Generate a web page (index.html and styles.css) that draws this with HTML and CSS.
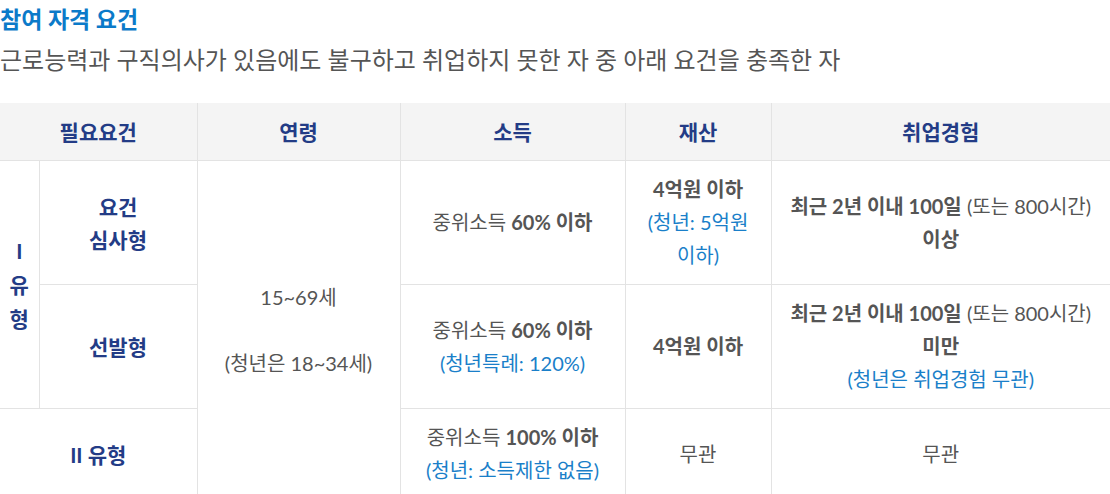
FILE: index.html
```html
<!DOCTYPE html>
<html lang="ko">
<head>
<meta charset="utf-8">
<link rel="stylesheet" href="styles.css">
</head>
<body>
<section class="req">
  <h3 class="req-title">참여 자격 요건</h3>
  <p class="req-desc">근로능력과 구직의사가 있음에도 불구하고 취업하지 못한 자 중 아래 요건을 충족한 자</p>
  <table class="req-table">
    <colgroup>
      <col class="c-type">
      <col class="c-sub">
      <col class="c-age">
      <col class="c-income">
      <col class="c-asset">
      <col class="c-exp">
    </colgroup>
    <thead>
      <tr>
        <th colspan="2">필요요건</th>
        <th>연령</th>
        <th>소득</th>
        <th>재산</th>
        <th>취업경험</th>
      </tr>
    </thead>
    <tbody>
      <tr>
        <th rowspan="2" class="type-v">I 유형</th>
        <th class="sub">요건<br>심사형</th>
        <td rowspan="3">15~69세<br><br>(청년은 18~34세)</td>
        <td>중위소득 <b>60% 이하</b></td>
        <td><b>4억원 이하</b><br><span class="blue">(청년: 5억원 이하)</span></td>
        <td><b>최근 2년 이내 100일</b> (또는 800시간)<br><b>이상</b></td>
      </tr>
      <tr>
        <th class="sub">선발형</th>
        <td>중위소득 <b>60% 이하</b><br><span class="blue">(청년특례: 120%)</span></td>
        <td><b>4억원 이하</b></td>
        <td><b>최근 2년 이내 100일</b> (또는 800시간)<br><b>미만</b><br><span class="blue">(청년은 취업경험 무관)</span></td>
      </tr>
      <tr>
        <th colspan="2" class="sub">II 유형</th>
        <td>중위소득 <b>100% 이하</b><br><span class="blue">(청년: 소득제한 없음)</span></td>
        <td>무관</td>
        <td>무관</td>
      </tr>
    </tbody>
  </table>
</section>
</body>
</html>
```

FILE: styles.css
```css
html, body {
  margin: 0;
  padding: 0;
  background: #fff;
}
body {
  font-family: Lato, "Noto Sans CJK KR", sans-serif;
  color: #555;
}
.req {
  width: 1110px;
}
.req-title {
  margin: 0;
  padding-top: 5px;
  font-size: 23px;
  line-height: 28px;
  font-weight: 700;
  color: #0b7ac9;
}
.req-desc {
  margin: 0;
  padding-top: 10px;
  font-size: 24px;
  line-height: 34px;
  color: #555;
}
.req-table {
  margin-top: 26px;
  width: 1110px;
  table-layout: fixed;
  border-collapse: collapse;
  font-size: 20px;
  line-height: 33px;
}
.c-type { width: 39px; }
.c-sub { width: 158px; }
.c-age { width: 203px; }
.c-income { width: 225px; }
.c-asset { width: 146px; }
.c-exp { width: 339px; }
.req-table th,
.req-table td {
  border: 1px solid #e3e3e3;
  text-align: center;
  vertical-align: middle;
  padding: 12px 4px;
  word-break: keep-all;
}
.req-table tr > :first-child { border-left: 0; }
.req-table tr > :last-child { border-right: 0; }
.req-table thead th {
  background: #f4f4f4;
  border-top: 0;
  color: #233c86;
  font-weight: 700;
  font-size: 21px;
}
.req-table tbody th {
  color: #233c86;
  font-weight: 700;
  font-size: 21px;
}
.req-table .type-v {
  padding: 0 9px;
  line-height: 34px;
  word-break: break-all;
  border-left: 0;
}
.req-table b {
  font-weight: 700;
  color: #555;
}
.blue {
  color: #1a7fc9;
}
```
